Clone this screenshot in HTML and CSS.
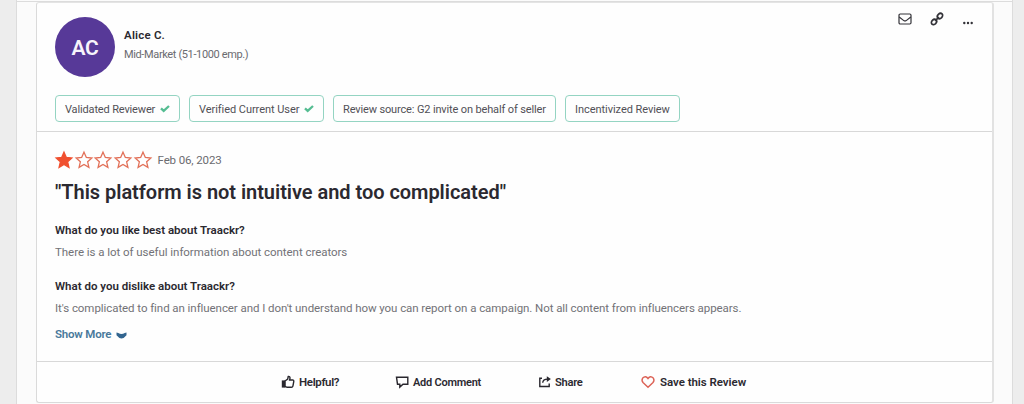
FILE: index.html
```html
<!DOCTYPE html>
<html lang="en">
<head>
<meta charset="utf-8">
<title>Review</title>
<link rel="stylesheet" href="styles.css">
</head>
<body>
<svg width="0" height="0" class="defs">
  <symbol id="star" viewBox="0 0 20 20"><path d="M10 2.200l2.350 5.200 5.500.6-4.200 3.800 1.270 5.550L10 14.500l-4.920 2.850L6.350 11.800l-4.200-3.800 5.500-.6z"/></symbol>
  <symbol id="check" viewBox="0 0 10 8"><path d="M1 3.300l2.700 2.600L9 1" fill="none" stroke="currentColor" stroke-width="2.3"/></symbol>
</svg>
<main class="page">
  <article class="card">
    <header class="head">
      <div class="author">
        <div class="avatar">AC</div>
        <div class="who">
          <div class="name"><span>Alice C.</span></div>
          <div class="company"><span>Mid-Market (51-1000 emp.)</span></div>
        </div>
        <div class="tools">
          <svg class="mail" width="14" height="12" viewBox="0 0 14 12"><rect x="1" y="1" width="12" height="10" rx="1.2"/><path d="M1.2 4l4.600 3.600q1.200.8 2.400 0L12.800 4"/></svg>
          <svg class="link" width="14" height="14" viewBox="0 0 14 14"><ellipse cx="4" cy="10" rx="2.900" ry="2.300" transform="rotate(-45 4 10)"/><ellipse cx="10" cy="4" rx="2.900" ry="2.300" transform="rotate(-45 10 4)"/><path d="M5.200 8.800l3.600-3.600"/></svg>
          <svg class="dots" width="10" height="4" viewBox="0 0 10 4"><circle cx="1.300" cy="2" r="1.200"/><circle cx="5" cy="2" r="1.200"/><circle cx="8.700" cy="2" r="1.200"/></svg>
        </div>
      </div>
      <div class="tags">
        <div class="tag t1"><span>Validated Reviewer</span><svg width="10" height="8"><use href="#check"/></svg></div>
        <div class="tag t2"><span>Verified Current User</span><svg width="10" height="8"><use href="#check"/></svg></div>
        <div class="tag t3"><span>Review source: G2 invite on behalf of seller</span></div>
        <div class="tag t4"><span>Incentivized Review</span></div>
      </div>
    </header>
    <section class="body">
      <div class="rating">
        <svg class="full" width="20" height="20"><use href="#star"/></svg><svg width="20" height="20"><use href="#star"/></svg><svg width="20" height="20"><use href="#star"/></svg><svg width="20" height="20"><use href="#star"/></svg><svg width="20" height="20"><use href="#star"/></svg>
        <span class="date">Feb 06, 2023</span>
      </div>
      <h1><span>"This platform is not intuitive and too complicated"</span></h1>
      <h2 class="q1"><span>What do you like best about Traackr?</span></h2>
      <p class="a1"><span>There is a lot of useful information about content creators</span></p>
      <h2 class="q2"><span>What do you dislike about Traackr?</span></h2>
      <p class="a2"><span>It's complicated to find an influencer and I don't understand how you can report on a campaign. Not all content from influencers appears.</span></p>
      <a class="more"><span>Show More</span><svg width="11" height="7" viewBox="0 0 11 7"><path d="M.5.5q1 0 1.800.6 3.200 1.700 6.400 0Q9.500.5 10.500.5v2.800Q8 6.500 5.500 6.500T.5 3.300z"/></svg></a>
    </section>
    <footer class="actions">
      <div class="act helpful"><svg width="14" height="14" viewBox="0 0 14 14"><path class="solid" d="M.8 5.400h3.400v7.200H.8z"/><path d="M4 6l2.700-1.800.5-2.700q1.800-.4 1.800 1.600L8.600 5h3.200q1.200.2 1 1.400l-.9 4.700q-.3 1.200-1.400 1.200H6.200L4 11.500z"/></svg><span>Helpful?</span></div>
      <div class="act comment"><svg width="14" height="14" viewBox="0 0 14 14"><path d="M1.500 2.200h11.300v7H8l-3.200 2.900V9.200H2.500z"/></svg><span>Add Comment</span></div>
      <div class="act share"><svg width="14" height="14" viewBox="0 0 14 14"><path d="M4 3.300H1.800v8.200h9.400V8.500"/><path d="M4.700 7.800q.2-3.700 5-3.700"/><path class="solid" d="M8.800 1.300L12.900 4.100 8.800 7z"/></svg><span>Share</span></div>
      <div class="act save"><svg width="14" height="14" viewBox="0 0 14 14"><path d="M7 12.300L2 7.500Q.2 5.200 1.700 3.100 4.600.3 7 3.500 9.400.3 12.300 3.100 13.800 5.200 12 7.500z"/></svg><span>Save this Review</span></div>
    </footer>
  </article>
</main>
</body>
</html>
```
FILE: styles.css
```css
* { box-sizing: border-box; }
body { margin: 0; height: 404px; overflow: hidden; background: #ededed; font-family: Roboto, "Liberation Sans", sans-serif; font-size: 11.5px; color: #2b2930; }
svg { display: block; flex: none; overflow: visible; }
.defs { position: absolute; }
.page { height: 404px; margin: 0 11px 0 16px; padding: 2px 18px 0 19px; background: #fbfbfb; border: solid #dcdcdc; border-width: 0 1px; background-image: linear-gradient(#dcdcdc, #dcdcdc); background-size: 100% 1px; background-repeat: no-repeat; background-position: 0 1px; }
.card { height: 401px; background: #fefefe; border: 1px solid #dadada; border-top-color: #e4e4e4; border-right: 2px solid #e2e2e2; border-radius: 3px; display: flex; flex-direction: column; }
.head { height: 129px; padding: 14px 17px 0 18px; border-bottom: 1px solid #d8d8d8; }
.author { display: flex; height: 60px; }
.avatar { width: 60px; height: 60px; border-radius: 50%; background: #573998; color: #f7f4fb; font-size: 21px; font-weight: 600; letter-spacing: -.4px; line-height: 62px; text-align: center; }
.who { margin-left: 9px; padding-top: 8px; }
.name, .company { line-height: 20px; white-space: nowrap; }
.name { font-weight: 600; letter-spacing: .2px; }
.company { color: #6b6b70; letter-spacing: -.37px; font-size: 11px; }
.tools { margin-left: auto; display: flex; align-items: flex-start; }
.tools svg { fill: none; stroke: #333238; stroke-width: 1.2; }
.mail { margin: -4px 18px 0 0; }
.tools .link { margin: -5px 19px 0 0; stroke-width: 1.7; }
.tools .dots { margin: 4px 2px 0 0; fill: #333238; stroke: none; }
.tags { display: flex; gap: 9px; margin-top: 18px; }
.tag { height: 27px; border: 1px solid #94d4c2; border-radius: 4px; padding: 0 9px; display: flex; align-items: center; justify-content: space-between; white-space: nowrap; font-size: 11px; color: #515056; }
.tag span { padding-top: 1px; }
.tag svg { color: #55bd92; }
.t1 { width: 125px; letter-spacing: -.15px; } .t2 { width: 135px; letter-spacing: -.05px; } .t3 { width: 223px; letter-spacing: -.14px; } .t4 { width: 115px; letter-spacing: -.05px; }
.body { height: 230px; padding: 18px 18px 0; border-bottom: 1px solid #d8d8d8; white-space: nowrap; }
.rating { display: flex; height: 20px; align-items: center; margin-left: -1px; }
.rating svg { fill: none; stroke: #e27058; stroke-width: 1.3; margin-right: -.3px; }
.rating .full { fill: #f0502f; stroke: #f0502f; }
.date { margin-left: 5px; color: #6b6b70; letter-spacing: -.12px; }
h1 { margin: 10px 0 0; font-size: 20px; font-weight: 600; line-height: 24px; letter-spacing: -.04px; }
h2 { margin: 0; font-size: 11.5px; font-weight: 600; line-height: 18px; }
p { margin: 0; line-height: 18px; color: #727277; letter-spacing: -.065px; }
.q1 { margin-top: 17px; } .a1 { margin-top: 4px; letter-spacing: -.045px; } .q2 { margin-top: 16px; } .a2 { margin-top: 4px; }
.more { display: flex; align-items: center; gap: 5px; margin-top: 8px; line-height: 18px; font-weight: 600; color: #48789a; letter-spacing: -.2px; }
.more svg { fill: #32658f; margin-top: 2px; }
.actions { flex: 1; display: flex; align-items: center; padding-left: 244px; font-weight: 600; white-space: nowrap; }
.act { display: flex; align-items: center; }
.act svg { fill: none; stroke: #29272e; stroke-width: 1.4; }
.act .solid { fill: #29272e; stroke: none; }
.act span { margin-left: 4px; }
.helpful { width: 114px; letter-spacing: -.35px; } .comment { width: 143px; letter-spacing: -.25px; font-size: 11px; } .share { width: 103px; letter-spacing: -.3px; font-size: 11.2px; }
.share span { margin-left: 3px; }
.save { letter-spacing: -.04px; }
.save span { margin-left: 5px; }
.save svg { stroke: #dc6256; }
```
